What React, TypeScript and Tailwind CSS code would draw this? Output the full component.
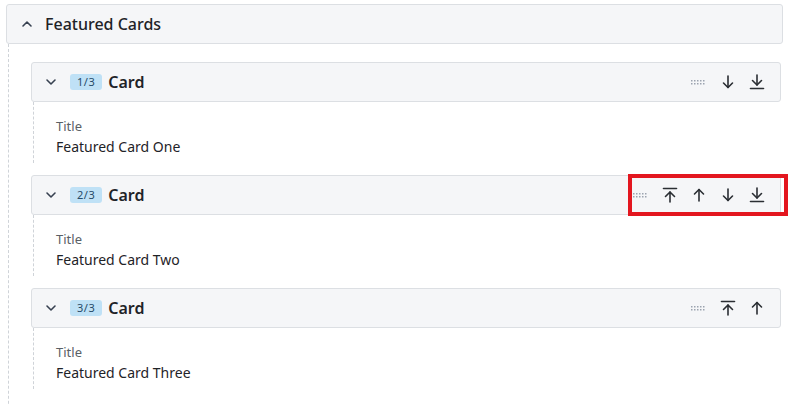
import React from 'react';

type IconProps = { className?: string };

const ChevronIcon: React.FC<{ up?: boolean }> = ({ up }) => (
  <svg width="16" height="16" viewBox="0 0 16 16" fill="none" stroke="currentColor" strokeWidth="1.6" strokeLinecap="round" strokeLinejoin="round">
    {up ? <path d="M4 10 L8 6 L12 10" /> : <path d="M4 6 L8 10 L12 6" />}
  </svg>
);

const GripIcon: React.FC<IconProps> = () => (
  <svg width="15" height="5" viewBox="0 0 15 5" fill="#9ca3af">
    {[0, 3, 6, 9, 12].map((x) => (
      <React.Fragment key={x}>
        <rect x={x} y={0} width="1.5" height="1.5" />
        <rect x={x} y={3} width="1.5" height="1.5" />
      </React.Fragment>
    ))}
  </svg>
);

const ArrowUpToLine = () => (
  <svg width="16" height="16" viewBox="0 0 16 16" fill="none" stroke="currentColor" strokeWidth="1.6" strokeLinecap="round" strokeLinejoin="round">
    <path d="M1.5 1.5 H14.5" />
    <path d="M8 15 V5" />
    <path d="M3.5 9.5 L8 5 L12.5 9.5" />
  </svg>
);

const ArrowUp = () => (
  <svg width="16" height="16" viewBox="0 0 16 16" fill="none" stroke="currentColor" strokeWidth="1.6" strokeLinecap="round" strokeLinejoin="round">
    <path d="M8 14 V2.5" />
    <path d="M3.5 7 L8 2.5 L12.5 7" />
  </svg>
);

const ArrowDown = () => (
  <svg width="16" height="16" viewBox="0 0 16 16" fill="none" stroke="currentColor" strokeWidth="1.6" strokeLinecap="round" strokeLinejoin="round">
    <path d="M8 2 V13.5" />
    <path d="M3.5 9 L8 13.5 L12.5 9" />
  </svg>
);

const ArrowDownToLine = () => (
  <svg width="16" height="16" viewBox="0 0 16 16" fill="none" stroke="currentColor" strokeWidth="1.6" strokeLinecap="round" strokeLinejoin="round">
    <path d="M8 1 V11" />
    <path d="M3.5 6.5 L8 11 L12.5 6.5" />
    <path d="M1.5 14.5 H14.5" />
  </svg>
);

type Action = 'top' | 'up' | 'down' | 'bottom';

const actionIcon: Record<Action, React.ReactNode> = {
  top: <ArrowUpToLine />,
  up: <ArrowUp />,
  down: <ArrowDown />,
  bottom: <ArrowDownToLine />,
};

const cards: { title: string; actions: Action[]; highlight?: boolean }[] = [
  { title: 'Featured Card One', actions: ['down', 'bottom'] },
  { title: 'Featured Card Two', actions: ['top', 'up', 'down', 'bottom'], highlight: true },
  { title: 'Featured Card Three', actions: ['top', 'up'] },
];

const CardItem: React.FC<{ index: number; total: number; title: string; actions: Action[]; highlight?: boolean }> = ({
  index,
  total,
  title,
  actions,
  highlight,
}) => (
  <div>
    <div className="relative flex h-[40px] items-center rounded-[3px] border border-[#dcdfe3] bg-[#f5f6f8] pl-[11px] pr-[9px]">
      <span className="flex w-[16px] justify-center text-[#374151]">
        <ChevronIcon />
      </span>
      <span className="ml-[11px] rounded-[3px] bg-[#bfe1f6] px-[7px] text-[11px] leading-[16px] tracking-[0.5px] text-[#274b69]">
        {index}/{total}
      </span>
      <span className="ml-[6px] text-[16px] font-semibold text-[#1f2328]">Card</span>
      <div className="ml-auto flex items-center text-[#2a2e33]">
        <span className="flex w-[29px] justify-center">
          <GripIcon />
        </span>
        {actions.map((a) => (
          <span key={a} className="flex w-[29px] justify-center">
            {actionIcon[a]}
          </span>
        ))}
      </div>
      {highlight && (
        <div className="pointer-events-none absolute left-[596px] top-[-2px] h-[42px] w-[160px] border-[4px] border-[#e3161f]" />
      )}
    </div>
    <div className="ml-[2px] border-l border-dashed border-[#cfd3d8] pb-[6px] pl-[22px] pt-[14px]">
      <div className="text-[13px] leading-[20px] text-[#5a5f66]">Title</div>
      <div className="text-[14px] leading-[21px] text-[#1f2328]">{title}</div>
    </div>
  </div>
);

export default function App() {
  return (
    <div className="h-[404px] w-[793px] overflow-hidden bg-white pt-[4px] font-['Noto_Sans',sans-serif]">
      <div className="ml-[6px] flex h-[40px] w-[777px] items-center rounded-[3px] border border-[#dcdfe3] bg-[#f5f6f8] pl-[12px]">
        <span className="flex w-[16px] justify-center text-[#374151]">
          <ChevronIcon up />
        </span>
        <span className="ml-[10px] text-[16px] font-medium text-[#1f2328]">Featured Cards</span>
      </div>
      <div className="ml-[8px] flex h-[400px] w-[773px] flex-col gap-[12px] border-l border-dashed border-[#cfd3d8] pl-[22px] pt-[18px]">
        {cards.map((c, i) => (
          <CardItem key={c.title} index={i + 1} total={cards.length} title={c.title} actions={c.actions} highlight={c.highlight} />
        ))}
      </div>
    </div>
  );
}
